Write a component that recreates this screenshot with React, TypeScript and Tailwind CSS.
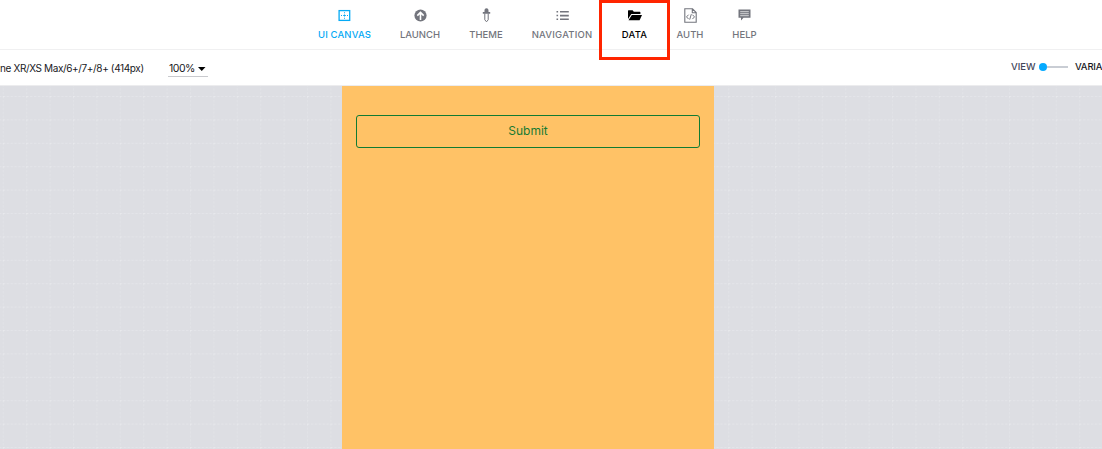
import type { ReactNode } from "react";

const CanvasIcon = () => (
  <svg width="13" height="13" viewBox="0 0 13 13" fill="currentColor">
    <rect x="1.1" y="1.6" width="10.6" height="9.8" fill="none" stroke="currentColor" strokeWidth="1.3" />
    <path d="M6 3.2h1v1H6zM6 5.5h1v2H6zM6 8.8h1v1H6zM3 6h1v1H3zM5.2 6h2.6v1H5.2zM9 6h1v1H9z" />
  </svg>
);

const LaunchIcon = () => (
  <svg width="13" height="13" viewBox="0 0 13 13">
    <circle cx="6.5" cy="6.5" r="6.1" fill="currentColor" />
    <path d="M6.5 11V3.6M3.3 6.6L6.5 3.4L9.7 6.6" fill="none" stroke="white" strokeWidth="1.6" />
  </svg>
);

const ThemeIcon = () => (
  <svg width="9" height="15" viewBox="0 0 9 15" fill="currentColor">
    <path d="M4.5 0.3C6 0.3 6.5 1.4 6.5 2.5V4H8.2V5.8H0.8V4H2.5V2.5C2.5 1.4 3 .3 4.5 .3Z" />
    <path d="M2.8 5.5V11.8L4.5 13.8L6.2 11.8V5.5" fill="none" stroke="currentColor" strokeWidth="1" />
  </svg>
);

const NavigationIcon = () => (
  <svg width="13" height="11" viewBox="0 0 13 11" fill="currentColor">
    <path d="M0.5 1h1.6v1.5H.5zM.5 4.8h1.6v1.5H.5zM.5 8.5h1.6V10H.5zM4 .9h8.8v1.7H4zM4 4.7h8.8v1.7H4zM4 8.4h8.8v1.7H4z" />
  </svg>
);

const DataIcon = () => (
  <svg width="14" height="11" viewBox="0 0 14 11" fill="currentColor">
    <path d="M0 .8Q0 .2 .6 .2H4.6L5.8 1.7H11.8Q12.4 1.7 12.4 2.3V4H3.3L0 9Z" />
    <path d="M3.8 4.9H14L11.6 10.3H.5Z" />
  </svg>
);

const AuthIcon = () => (
  <svg width="13" height="15" viewBox="0 0 13 15" fill="none" stroke="currentColor">
    <path d="M.8 .8H8.5L12.2 4.5V14.2H.8ZM8.3 .8V4.7H12.2" strokeWidth="1.1" />
    <path d="M4.6 6.7L2.5 8.9L4.6 11.1M8.4 6.7L10.5 8.9L8.4 11.1M7.3 6.2L5.7 11.6" strokeWidth="1" />
  </svg>
);

const HelpIcon = () => (
  <svg width="13" height="12" viewBox="0 0 13 12">
    <path d="M.5 .5H12.5V8.8H5.5L3 11.5V8.8H.5Z" fill="currentColor" />
    <path d="M2.2 2.7H10.8M2.2 4.7H10.8M2.2 6.7H10.8" stroke="white" strokeWidth=".7" />
  </svg>
);

function Tab({ icon, label, className }: { icon: ReactNode; label: string; className: string }) {
  return (
    <button className={`flex shrink-0 flex-col items-center whitespace-nowrap text-[9.5px] leading-3 font-medium ${className}`}>
      <span className="flex h-[18px] items-center">{icon}</span>
      <span className="mt-[5px]">{label}</span>
    </button>
  );
}

export default function App() {
  return (
    <div className="flex h-[449px] w-[1102px] flex-col overflow-hidden bg-white font-['Inter','Liberation_Sans',sans-serif]">
      <nav className="relative flex h-[50px] shrink-0 items-start border-b border-[#f0f0f1] pt-1.5 pl-[318px] text-[#73757d]">
        <Tab icon={<CanvasIcon />} label="UI CANVAS" className="w-[53px] tracking-[0.15px] text-[#05aaf5]" />
        <Tab icon={<LaunchIcon />} label="LAUNCH" className="ml-[29px] w-10" />
        <Tab icon={<ThemeIcon />} label="THEME" className="ml-[29px] w-[34px]" />
        <Tab icon={<NavigationIcon />} label="NAVIGATION" className="ml-[29px] w-[60px] tracking-[0.2px]" />
        <Tab icon={<DataIcon />} label="DATA" className="ml-[29px] w-[27px] tracking-[0.3px] text-black" />
        <Tab icon={<AuthIcon />} label="AUTH" className="ml-7 w-7" />
        <Tab icon={<HelpIcon />} label="HELP" className="ml-[28px] w-[25px]" />
        <div className="absolute top-0 left-[599px] h-[60px] w-[71px] border-3 border-[#ff2500]" />
      </nav>

      <div className="flex h-9 shrink-0 items-start justify-between border-b border-[#ececee] text-[#18191d]">
        <div className="flex pt-[11px] text-[10.5px] leading-4 whitespace-nowrap">
          <div className="w-[143px] text-[10px] leading-[14px] tracking-[-0.37px]">ne XR/XS Max/6+/7+/8+ (414px)</div>
          <button className="ml-[25px] flex h-4 w-10 items-center border-b border-[#c9cace] pl-px tracking-[-0.5px]">
            100%
            <svg className="ml-[3px]" width="8" height="4" viewBox="0 0 8 4"><path d="M0 0H7.5L3.75 4Z" /></svg>
          </button>
        </div>
        <div className="flex w-[91px] shrink-0 items-center pt-[11px] text-[9.5px] leading-3 font-medium whitespace-nowrap">
          <span className="w-[28px] shrink-0 text-[#42465a]">VIEW</span>
          <span className="flex w-[29px] shrink-0 items-center">
            <span className="h-2 w-2 shrink-0 rounded-full bg-[#05aaff]" />
            <span className="h-0.5 flex-1 bg-[#c9cdd4]" />
          </span>
          <span className="ml-[7px] shrink-0 tracking-[-0.2px]">VARIA</span>
        </div>
      </div>

      <main className="relative flex flex-1 justify-center bg-[#dddee3] pr-[46px]">
        <svg className="absolute inset-0" width="1102" height="363">
          <defs>
            <pattern id="grid" x="2.8" y="10" width="23.4" height="23.4" patternUnits="userSpaceOnUse">
              <path d="M0 .5H23.4" stroke="#e4e5e9" strokeWidth=".9" strokeDasharray="2.3 1.6" />
              <path d="M.5 0V23.4" stroke="#e2e3e7" strokeWidth=".9" strokeDasharray="2.3 1.6" />
              <path d="M0 .5H1.5M.5 0V1.5" stroke="#e9eaed" strokeWidth="1" />
            </pattern>
          </defs>
          <rect width="1102" height="363" fill="url(#grid)" />
        </svg>
        <section className="relative w-[372px] shrink-0 bg-[#ffc266] px-3.5 pt-[29px]">
          <button className="flex h-[33px] w-full items-center justify-center rounded-[3px] border border-[#117b33] pb-px text-[12px] text-[#187a32]">
            Submit
          </button>
        </section>
      </main>
    </div>
  );
}
